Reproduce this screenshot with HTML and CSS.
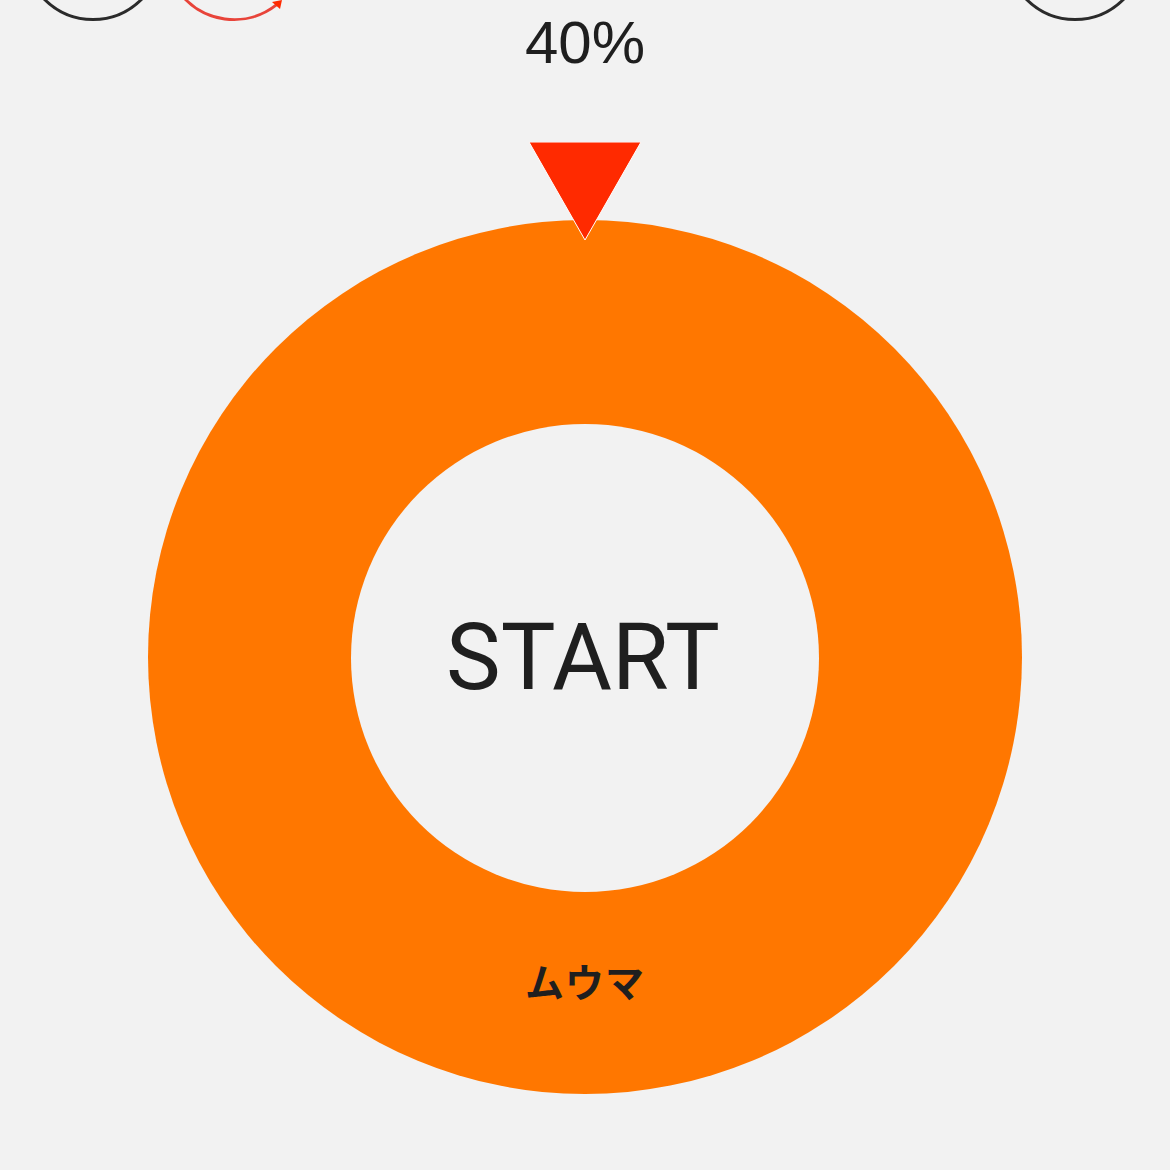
FILE: index.html
```html
<!DOCTYPE html>
<html lang="ja">
<head>
<meta charset="utf-8">
<link rel="stylesheet" href="styles.css">
</head>
<body>
<div class="screen">
  <div class="icon-row">
    <svg class="ring-icon" viewBox="0 0 140 140"><circle cx="70" cy="70" r="68.5" fill="none" stroke="#2b2b2b" stroke-width="3"/></svg>
    <svg class="ring-icon" viewBox="0 0 140 140">
      <path d="M 112.7 123.7 A 68.5 68.5 0 1 1 129.3 35.7" fill="none" stroke="#e8443a" stroke-width="3"/>
      <polygon points="118,119 116,128 108,121" fill="#ff2a00"/>
    </svg>
    <svg class="ring-icon right" viewBox="0 0 140 140"><circle cx="70" cy="70" r="68.5" fill="none" stroke="#2b2b2b" stroke-width="3"/></svg>
  </div>
  <div class="percent">40%</div>
  <svg class="pointer" viewBox="0 0 112 100"><polygon points="0,0 112,0 56,98" fill="#ff2a00" stroke="#ffffff" stroke-width="1"/></svg>
  <div class="wheel">
    <div class="hole"><span class="start">START</span></div>
    <div class="label">ムウマ</div>
  </div>
</div>
</body>
</html>
```
FILE: styles.css
```css
html, body {
  margin: 0;
  padding: 0;
  background: #f2f2f2;
}
.screen {
  width: 1170px;
  height: 1170px;
  overflow: hidden;
  display: flex;
  flex-direction: column;
  align-items: center;
  font-family: "Liberation Sans", Arial, sans-serif;
  color: #1f1f1f;
}
.icon-row {
  align-self: stretch;
  display: flex;
  gap: 1px;
  margin-top: -119px;
  padding: 0 25px 0 23px;
  height: 140px;
  flex-shrink: 0;
}
.ring-icon {
  width: 140px;
  height: 140px;
  display: block;
  overflow: visible;
  flex-shrink: 0;
}
.ring-icon.right {
  margin-left: auto;
}
.percent {
  font-family: "Liberation Sans", Arial, sans-serif;
  font-size: 60px;
  line-height: 58px;
  margin-top: -7px;
  height: 58px;
  flex-shrink: 0;
}
.pointer {
  width: 112px;
  height: 100px;
  margin-top: 70px;
  margin-bottom: -22px;
  position: relative;
  z-index: 2;
  display: block;
  flex-shrink: 0;
}
.wheel {
  width: 874px;
  height: 874px;
  border-radius: 50%;
  background: #ff7700;
  display: flex;
  flex-direction: column;
  align-items: center;
  padding-top: 204px;
  box-sizing: border-box;
  flex-shrink: 0;
}
.hole {
  width: 468px;
  height: 468px;
  border-radius: 50%;
  background: #f2f2f2;
  display: flex;
  align-items: center;
  justify-content: center;
  flex-shrink: 0;
}
.start {
  font-family: Roboto, "Liberation Sans", sans-serif;
  font-size: 92px;
  line-height: 1;
  letter-spacing: 0;
  margin-right: 4px;
  color: #1f1f1f;
}
.label {
  margin-top: 69px;
  font-family: "Noto Sans CJK JP", sans-serif;
  font-weight: 700;
  font-size: 39px;
  line-height: 1;
  letter-spacing: 1px;
  color: #1f1f1f;
}
```
